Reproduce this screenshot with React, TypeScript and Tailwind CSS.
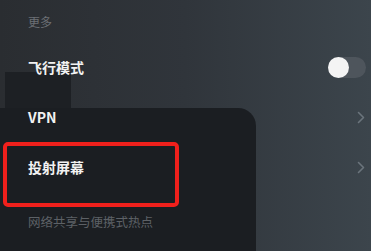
import React from 'react';

const font = { fontFamily: '"Noto Sans CJK SC", "Noto Sans", sans-serif' };

const Chevron = () => (
  <svg width="8" height="13" viewBox="0 0 8 13" fill="none">
    <path d="M1.5 1.5 L6.5 6.5 L1.5 11.5" stroke="#6b747c" strokeWidth="1.6" strokeLinecap="round" strokeLinejoin="round" />
  </svg>
);

const Toggle = () => (
  <div className="relative h-[21px] w-[38px] rounded-full bg-[#4e555c]">
    <div className="absolute left-0 top-0 h-[21px] w-[21px] rounded-full bg-[#f4f4f4]" />
  </div>
);

const Row = ({ title, right }: { title: string; right?: React.ReactNode }) => (
  <div className="flex h-[50px] items-center justify-between pl-[28px] pr-[6px]">
    <span className="text-[14px] font-bold leading-none text-[#f2f2f2]">{title}</span>
    {right}
  </div>
);

export default function App() {
  return (
    <div
      className="relative h-[251px] w-[371px] overflow-hidden bg-gradient-to-r from-[#2a2d31] via-[#30353b] to-[#3c454c]"
      style={font}
    >
      {/* reflection in the photo */}
      <div className="absolute left-[5px] top-[72px] h-[60px] w-[66px] bg-[#1d2024]" />
      <div className="absolute left-0 top-[108px] h-[160px] w-[256px] rounded-tr-[18px] bg-[#1b1e22]" />

      <div className="relative flex flex-col">
        <div className="flex h-[42px] items-start pl-[28px] pt-[16px]">
          <span className="text-[12px] leading-none text-[#6c7075]">更多</span>
        </div>
        <div className="flex h-[50px] items-center justify-between pl-[28px] pr-[5px]">
          <span className="text-[14px] font-bold leading-none text-[#f2f2f2]">飞行模式</span>
          <Toggle />
        </div>
        <Row title="VPN" right={<Chevron />} />
        <Row title="投射屏幕" right={<Chevron />} />
        <div className="flex h-[60px] items-start pl-[28px] pt-[24px]">
          <span className="text-[12.5px] leading-none text-[#5d6166]">网络共享与便携式热点</span>
        </div>
      </div>

      {/* annotation box */}
      <div className="absolute left-[3px] top-[142px] h-[65px] w-[176px] rounded-[5px] border-[4px] border-[#f0201c]" />
    </div>
  );
}
